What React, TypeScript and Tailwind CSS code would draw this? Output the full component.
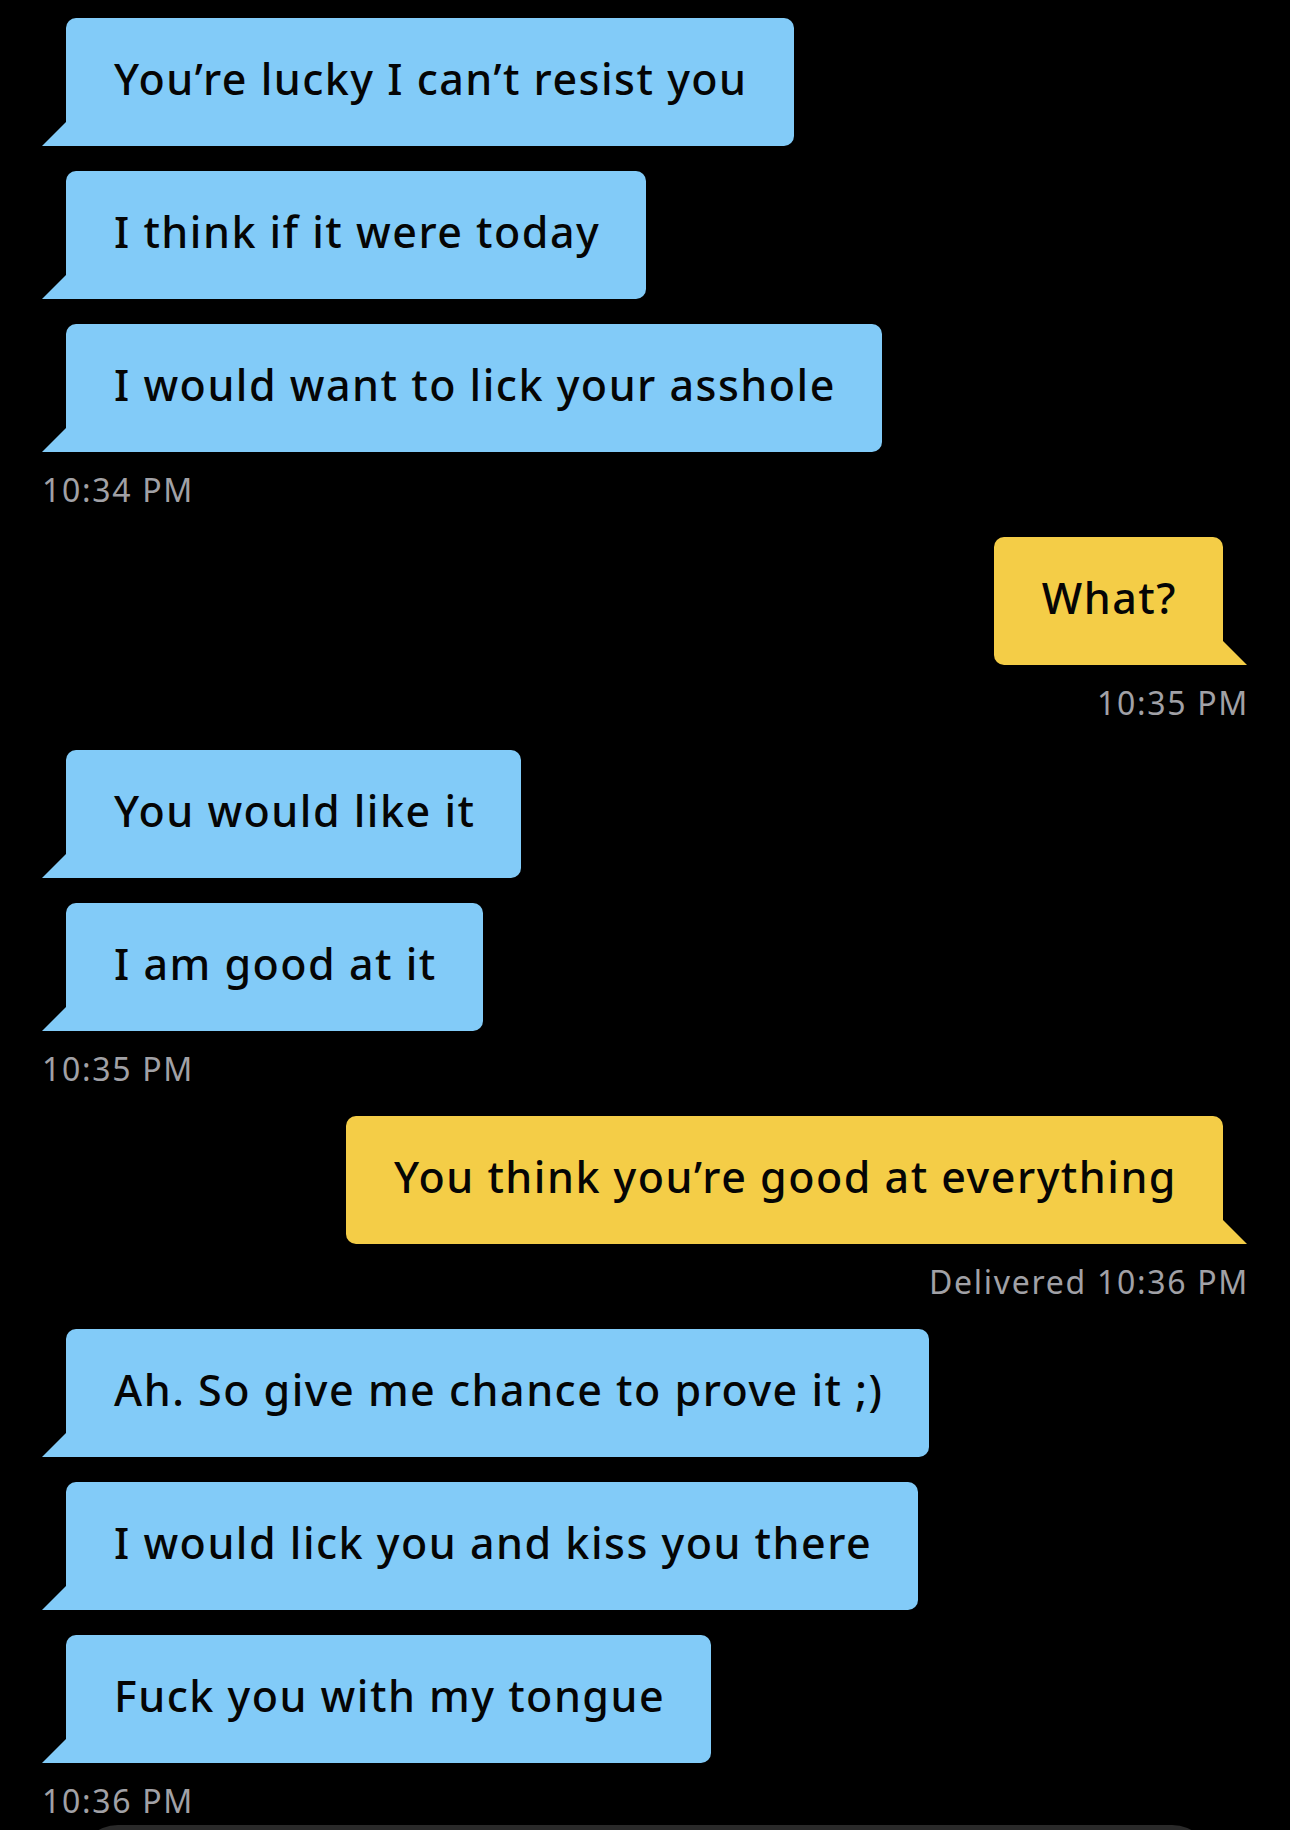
type Msg = { text: string }
type Group = { side: 'in' | 'out'; msgs: Msg[]; stamp: string }

const groups: Group[] = [
  {
    side: 'in',
    msgs: [
      { text: 'You’re lucky I can’t resist you' },
      { text: 'I think if it were today' },
      { text: 'I would want to lick your asshole' },
    ],
    stamp: '10:34 PM',
  },
  { side: 'out', msgs: [{ text: 'What?' }], stamp: '10:35 PM' },
  {
    side: 'in',
    msgs: [{ text: 'You would like it' }, { text: 'I am good at it' }],
    stamp: '10:35 PM',
  },
  {
    side: 'out',
    msgs: [{ text: 'You think you’re good at everything' }],
    stamp: 'Delivered 10:36 PM',
  },
  {
    side: 'in',
    msgs: [
      { text: 'Ah. So give me chance to prove it ;)' },
      { text: 'I would lick you and kiss you there' },
      { text: 'Fuck you with my tongue' },
    ],
    stamp: '10:36 PM',
  },
]

function Bubble({ text, side }: { text: string; side: 'in' | 'out' }) {
  const incoming = side === 'in'
  return (
    <div
      className={
        incoming
          ? 'relative ml-6 self-start rounded-[10px] rounded-bl-none bg-[#82cbf8] pl-12 pr-[46px] pt-[36px] pb-[42px]'
          : 'relative mr-6 self-end rounded-[10px] rounded-br-none bg-[#f4cd47] pl-12 pr-[46px] pt-[36px] pb-[42px]'
      }
    >
      <span className="block whitespace-nowrap text-[43px] leading-[50px] font-medium tracking-[1.5px] text-[#050505]">
        {text}
      </span>
      {incoming ? (
        <div className="absolute bottom-0 -left-6 h-6 w-6 bg-[#82cbf8] [clip-path:polygon(100%_0,100%_100%,0_100%)]" />
      ) : (
        <div className="absolute bottom-0 -right-6 h-6 w-6 bg-[#f4cd47] [clip-path:polygon(0_0,100%_100%,0_100%)]" />
      )}
    </div>
  )
}

export default function App() {
  return (
    <div
      className="h-[1830px] w-[1290px] overflow-hidden bg-black"
      style={{ fontFamily: '"Noto Sans", "Open Sans", sans-serif' }}
    >
      <div className="flex flex-col pt-[18px] pl-[42px] pr-[43px]">
        {groups.map((g, i) => (
          <div key={i} className="flex flex-col mb-[31px]">
            <div className="flex flex-col gap-[25px]">
              {g.msgs.map((m, j) => (
                <Bubble key={j} text={m.text} side={g.side} />
              ))}
            </div>
            <div
              className={
                'mt-[22px] text-[32px] leading-[32px] tracking-[1.7px] text-[#a1a1a6] ' +
                (g.side === 'in' ? 'self-start' : 'self-end -mr-[2px]')
              }
            >
              {g.stamp}
            </div>
          </div>
        ))}
      </div>
      <div className="mx-[78px] -mt-[23px] h-[80px] rounded-[40px] bg-[#2a2a2a]" />
    </div>
  )
}
